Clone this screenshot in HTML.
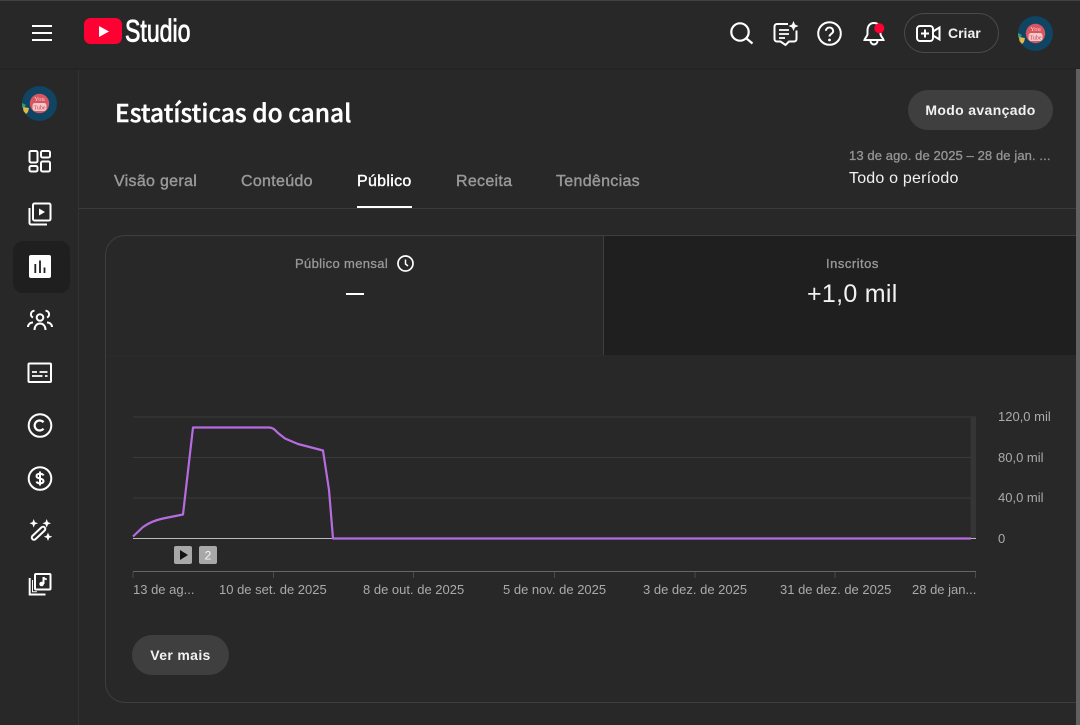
<!DOCTYPE html>
<html lang="pt"><head><meta charset="utf-8"><title>Estatísticas do canal</title>
<style>
html,body{margin:0;padding:0;width:1080px;height:725px;overflow:hidden;background:#282828}
body{position:relative;font-family:"Liberation Sans",Arial,sans-serif;color:#fff}
.a{position:absolute;white-space:nowrap}
svg{position:absolute;overflow:visible}
.ic{fill:none;stroke:#fff;stroke-width:2}
.tab{top:172px;font-size:16px;line-height:20px;color:#999;letter-spacing:.3px;-webkit-text-stroke:.4px #999}
.x{top:582px;font-size:13px;line-height:16px;color:#aaa}
.y{left:998px;font-size:13px;line-height:16px;color:#aaa}
</style></head><body>
<div class="a" style="left:0;top:0;width:1080px;height:1px;background:#3e4347"></div>
<div class="a" style="left:0;top:68px;width:1080px;height:2px;background:#242424"></div>
<div class="a" style="left:78px;top:70px;width:1px;height:655px;background:#333"></div>
<div class="a" style="left:79px;top:208px;width:997px;height:1px;background:#3a3a3a"></div>

<!-- menu -->
<svg style="left:32px;top:25px" width="20" height="16"><path d="M0 1H20M0 8H20M0 15H20" stroke="#fff" stroke-width="2"/></svg>
<!-- logo -->
<svg style="left:84px;top:18px" width="38" height="26"><rect width="38" height="26" rx="6.500" fill="#ff0033"/><path d="M15 8 25 13.500 15 19Z" fill="#fff"/></svg>
<div class="a" style="left:125px;top:14px;font-family:'Liberation Sans Narrow','Liberation Sans',sans-serif;font-size:30px;line-height:36px;color:#fff;-webkit-text-stroke:.8px #fff;transform-origin:0 50%;transform:scale(.77,1.05)">Studio</div>

<!-- header icons -->
<svg class="ic" style="left:730px;top:22px" width="24" height="24"><circle cx="10" cy="10" r="8.700" stroke-width="2.200"/><path d="M16.500 16.500 22.500 21.500" stroke-width="2.200"/></svg>
<svg class="ic" style="left:773px;top:21px" width="26" height="26"><path d="M15 3H4a2.500 2.500 0 0 0-2.500 2.500V18A2.500 2.500 0 0 0 4 20.500H7.500L12.500 24 16 20.500H21A2.500 2.500 0 0 0 23.500 18V9.500"/><path d="M6 9H16M6 13H16M6 17H12" stroke-width="1.800"/><path d="M20.500 0 22 3.500 25.500 5 22 6.500 20.500 10 19 6.500 15.500 5 19 3.500Z" fill="#fff" stroke="none"/></svg>
<svg class="ic" style="left:817px;top:21px" width="26" height="26"><circle cx="12.500" cy="12.500" r="11.300" stroke-width="2"/><path d="M8.800 9.800A3.700 3.700 0 0 1 12.500 6.500 3.600 3.600 0 0 1 16.200 10C16.200 12.800 12.500 12.800 12.500 15.500" stroke-width="2"/><circle cx="12.500" cy="19" r="1.400" fill="#fff" stroke="none"/></svg>
<svg class="ic" style="left:863px;top:21px" width="24" height="26"><path d="M11 2C6.500 2 4.500 5.500 4.500 9.500V13C4.500 15 2 17 1.500 19H20.500C20 17 17.500 15 17.500 13V9.500C17.500 5.500 15.500 2 11 2Z"/><path d="M7.500 20A3.500 3.500 0 0 0 14.500 20"/><circle cx="16.300" cy="7.300" r="5" fill="#ff0033" stroke="none"/></svg>
<div class="a" style="left:904px;top:13px;width:93px;height:38px;border:1px solid #4a4a4a;border-radius:20px"></div>
<svg class="ic" style="left:916px;top:24px" width="26" height="20"><rect x="1" y="2" width="16" height="15" rx="3"/><path d="M9 5.500V13.500M5 9.500H13M17 7.500 23.500 3.500V15.500L17 11.500"/></svg>
<div class="a" style="left:948px;top:24px;font-size:14px;line-height:18px;font-weight:700;color:#f1f1f1">Criar</div>

<!-- avatars -->
<svg style="left:1018px;top:16px" width="35" height="35"><circle cx="17.500" cy="17.500" r="17.500" fill="#0f4462"/><circle cx="17.500" cy="17.500" r="9.700" fill="#d9555f"/><rect x="10.500" y="17" width="14" height="8" rx="2.500" fill="#f2c9c9"/><text x="17.500" y="15" font-size="6.500" fill="#f2d6d6" text-anchor="middle" font-family="Liberation Sans Narrow">You</text><text x="17.500" y="23.300" font-size="6" fill="#c9434f" text-anchor="middle" font-family="Liberation Sans Narrow">Tube</text><path d="M0 17 4 19 2 22 0 21Z" fill="#2f9a73"/><path d="M1 21 7 22 6 26 4 28 1.500 25Z" fill="#e0b94a"/></svg>
<svg style="left:22px;top:86px" width="35" height="35"><circle cx="17.500" cy="17.500" r="17.500" fill="#0f4462"/><circle cx="17.500" cy="17.500" r="9.700" fill="#d9555f"/><rect x="10.500" y="17" width="14" height="8" rx="2.500" fill="#f2c9c9"/><text x="17.500" y="15" font-size="6.500" fill="#f2d6d6" text-anchor="middle" font-family="Liberation Sans Narrow">You</text><text x="17.500" y="23.300" font-size="6" fill="#c9434f" text-anchor="middle" font-family="Liberation Sans Narrow">Tube</text><path d="M0 17 4 19 2 22 0 21Z" fill="#2f9a73"/><path d="M1 21 7 22 6 26 4 28 1.500 25Z" fill="#e0b94a"/></svg>

<!-- sidebar -->
<div class="a" style="left:13px;top:241px;width:57px;height:52px;border-radius:10px;background:#1f1f1f"></div>
<svg class="ic" style="left:28px;top:149px" width="24" height="24"><rect x="1.500" y="2" width="8" height="11.500" rx="1.500"/><rect x="13" y="2" width="9" height="6.500" rx="1.500"/><rect x="1.500" y="17" width="8" height="5.500" rx="1.500"/><rect x="13" y="12.500" width="9" height="10" rx="1.500"/></svg>
<svg class="ic" style="left:28px;top:202px" width="24" height="24"><rect x="5" y="1.500" width="17.500" height="17" rx="1.500"/><path d="M1.500 6V21A1.500 1.500 0 0 0 3 22.500H19"/><path d="M11 6.500 17 10 11 13.500Z" fill="#fff" stroke="none"/></svg>
<svg style="left:29px;top:255px" width="22" height="23"><rect width="22" height="23" rx="2" fill="#fff"/><path d="M6.300 9V18M11 5.500V18M15.500 12.500V18" stroke="#1f1f1f" stroke-width="1.800"/></svg>
<svg class="ic" style="left:27px;top:309px" width="26" height="23"><circle cx="13" cy="8.500" r="3.300"/><path d="M7.500 21C7.500 17 9.800 14.500 13 14.500S18.500 17 18.500 21"/><path d="M7.500 1.800A3.500 3.500 0 0 0 6 8.500M18.500 1.800A3.500 3.500 0 0 1 20 8.500M1 18C1 15.500 3 13.500 6 13.500M25 18C25 15.500 23 13.500 20 13.500"/></svg>
<svg class="ic" style="left:27px;top:362px" width="26" height="22"><rect x="1.500" y="1.500" width="22.500" height="18.500" rx="1"/><path d="M5 10H10M12.500 10H20.500M5 14H15.500M18 14H20.500" stroke-width="1.800"/></svg>
<svg class="ic" style="left:27px;top:413px" width="26" height="26"><circle cx="13" cy="12.500" r="11.300" stroke-width="2"/><path d="M16.500 9.300A5 5 0 1 0 16.500 15.700" stroke-width="2.200"/></svg>
<svg class="ic" style="left:27px;top:466px" width="26" height="26"><circle cx="13" cy="12.500" r="11.300" stroke-width="2"/><path d="M16.500 9.500C16 8.200 14.800 7.700 13 7.700 10.800 7.700 9.500 8.500 9.500 10 9.500 11.600 10.800 12 13 12.500S16.500 13.600 16.500 15C16.500 16.600 15.200 17.300 13 17.300 11.200 17.300 10 16.800 9.500 15.500M13 5.500V19.500" stroke-width="2"/></svg>
<svg style="left:28px;top:519px" width="25" height="25"><path d="M5.700 0 6.900 3.100 10 4.300 6.900 5.500 5.700 8.600 4.500 5.500 1.500 4.300 4.500 3.100ZM18.700 0 19.900 3.100 23 4.300 19.900 5.500 18.700 8.600 17.500 5.500 14.500 4.300 17.500 3.100ZM20 13.500 21.200 16.500 24.300 17.700 21.200 18.900 20 22 18.800 18.900 15.800 17.700 18.800 16.500Z" fill="#fff"/><path d="M6 18.500 15 10" stroke="#fff" stroke-width="6.500" stroke-linecap="round"/><path d="M6 18.500 15 10" stroke="#282828" stroke-width="2.500" stroke-linecap="round"/></svg>
<svg class="ic" style="left:28px;top:572px" width="24" height="24"><rect x="7" y="2" width="15.500" height="15.500" rx="1"/><path d="M1.700 6V22.500H17.500"/><path d="M4.500 8V19.800H9" stroke-width="1"/><path d="M15.500 5V12" stroke-width="2"/><circle cx="13.600" cy="12" r="2.300" fill="#fff" stroke="none"/><path d="M15.500 5C16 6.700 17.300 7.200 18.800 7.200" stroke-width="1.800"/></svg>

<!-- title -->
<div class="a" style="left:115px;top:98px;font-family:'Noto Sans CJK SC','DejaVu Sans',sans-serif;font-size:24.500px;line-height:30px;font-weight:500;color:#fff;-webkit-text-stroke:.4px #fff">Estatísticas do canal</div>
<div class="a" style="left:908px;top:90px;width:145px;height:40px;border-radius:20px;background:#3f3f3f;font-size:14px;line-height:40px;font-weight:700;letter-spacing:.35px;text-align:center;color:#f1f1f1">Modo avançado</div>
<div class="a" style="left:849px;top:148px;font-size:13px;line-height:16px;color:#959595;letter-spacing:.1px;-webkit-text-stroke:.3px #959595">13 de ago. de 2025 – 28 de jan. ...</div>
<div class="a" style="left:849px;top:169px;font-size:16px;line-height:20px;letter-spacing:.2px;color:#f1f1f1">Todo o período</div>

<!-- tabs -->
<div class="a tab" style="left:114px">Visão geral</div>
<div class="a tab" style="left:241px">Conteúdo</div>
<div class="a tab" style="left:357px;color:#fff;-webkit-text-stroke:.4px #fff">Público</div>
<div class="a tab" style="left:456px">Receita</div>
<div class="a tab" style="left:556px">Tendências</div>
<div class="a" style="left:357px;top:206px;width:55px;height:2px;background:#fff"></div>

<!-- card -->
<div class="a" style="left:105px;top:235px;width:1000px;height:466px;border:1px solid #3e3e3e;border-radius:20px"></div>
<div class="a" style="left:603px;top:236px;width:473px;height:119px;background:#1f1f1f;border-left:1px solid #3e3e3e"></div>
<div class="a" style="left:106px;top:355px;width:498px;height:1px;background:#2b2b2b"></div>
<div class="a" style="left:295px;top:256px;font-size:13px;line-height:16px;color:#999;letter-spacing:.35px;-webkit-text-stroke:.3px #999">Público mensal</div>
<svg class="ic" style="left:397px;top:255px" width="17" height="17"><circle cx="8.500" cy="8.500" r="7.500" stroke-width="1.700"/><path d="M8.500 4.500V9L11 11" stroke-width="1.500"/></svg>
<div class="a" style="left:346px;top:293px;width:18px;height:2px;background:#fff"></div>
<div class="a" style="left:826px;top:256px;font-size:13px;line-height:16px;color:#999;letter-spacing:.5px;-webkit-text-stroke:.3px #999">Inscritos</div>
<div class="a" style="left:807px;top:279px;font-size:25px;line-height:30px;letter-spacing:.3px;color:#f1f1f1">+1,0 mil</div>

<!-- scrollbar -->
<div class="a" style="left:1076px;top:69px;width:4px;height:656px;background:#606060"></div>

<!-- chart -->
<svg style="left:0;top:0" width="1080" height="725">
<path d="M133 417H976M133 457.500H976M133 498H976" stroke="#3a3a3a" stroke-width="1"/>
<rect x="970.500" y="417" width="5.500" height="121" fill="#353535"/>
<path d="M133 538.500H976" stroke="#bbb" stroke-width="1"/>
<path d="M133 571.500H976" stroke="#666" stroke-width="1" fill="none"/>
<path d="M133 572V578M273.500 572V578M413.500 572V578M554.500 572V578M695 572V578M835 572V578M975.500 572V578" stroke="#4a4a4a" stroke-width="1" fill="none"/>
<path d="M133 536.500 143 527 C150 522 156 520 163 518.500L183 514.500 193 427.500H269C273 427.500 275 430 278 433L285 438.500 298 444 323 450.500 329 490 333 538.500H971" fill="none" stroke="#b66ce0" stroke-width="2.200" stroke-linejoin="round"/>
<rect x="174" y="546" width="18" height="18" rx="2" fill="#a8a8a8"/><path d="M180 550V560L188 555Z" fill="#111"/>
<rect x="199" y="546" width="18" height="18" rx="2" fill="#a8a8a8"/>
<text x="208" y="559.500" font-size="12" fill="#f5f5f5" text-anchor="middle" font-family="Liberation Sans">2</text>
</svg>
<div class="a y" style="top:409px">120,0 mil</div>
<div class="a y" style="top:450px">80,0 mil</div>
<div class="a y" style="top:490px">40,0 mil</div>
<div class="a y" style="top:531px">0</div>
<div class="a x" style="left:133px">13 de ag...</div>
<div class="a x" style="left:219px">10 de set. de 2025</div>
<div class="a x" style="left:363px">8 de out. de 2025</div>
<div class="a x" style="left:503px">5 de nov. de 2025</div>
<div class="a x" style="left:643px">3 de dez. de 2025</div>
<div class="a x" style="left:780px">31 de dez. de 2025</div>
<div class="a x" style="left:912px">28 de jan...</div>
<div class="a" style="left:132px;top:635px;width:97px;height:40px;border-radius:20px;background:#3f3f3f;font-size:14px;line-height:40px;font-weight:700;letter-spacing:.35px;text-align:center;color:#f1f1f1">Ver mais</div>
</body></html>
